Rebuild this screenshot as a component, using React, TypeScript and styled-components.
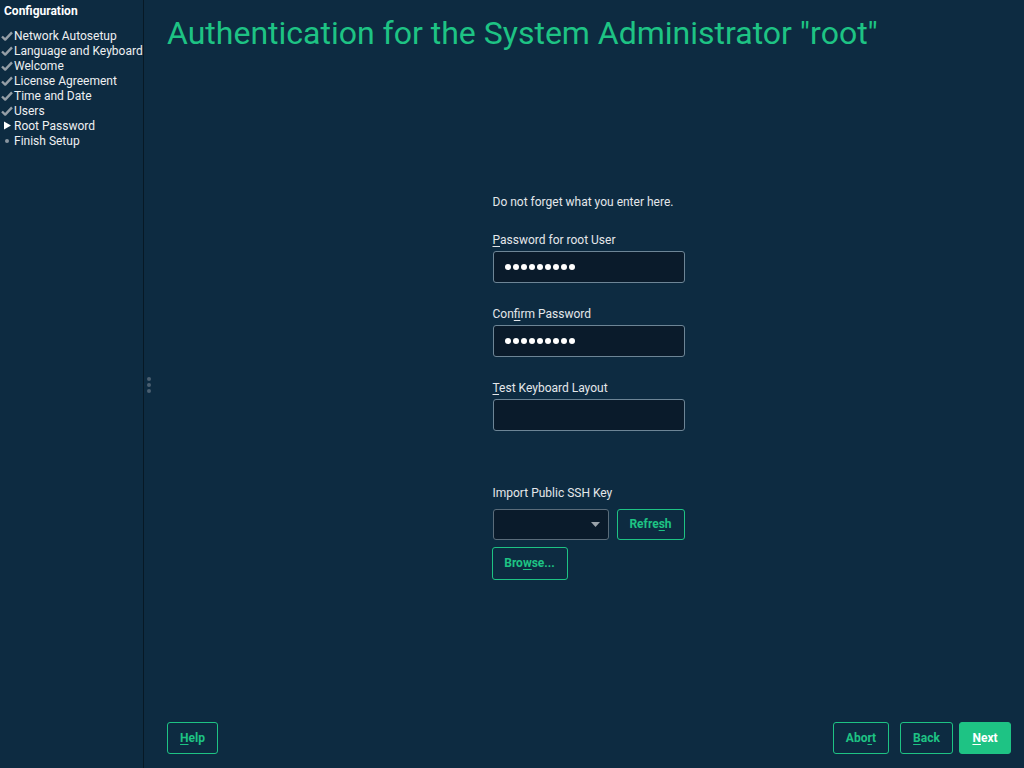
import styled, { createGlobalStyle } from "styled-components";

const GREEN = "#1ec384";
const BG = "#0d2b41";

const GlobalStyle = createGlobalStyle`
  html, body {
    margin: 0;
    padding: 0;
    background: ${BG};
    font-family: Roboto, "Liberation Sans", sans-serif;
  }
  #root {
    height: 768px;
  }
`;

const Screen = styled.div`
  display: flex;
  width: 1024px;
  height: 768px;
  background: ${BG};
  color: #e4e7ea;
  overflow: hidden;
`;

const Sidebar = styled.aside`
  width: 144px;
  flex-shrink: 0;
  border-right: 1px solid #071925;
  padding: 4px 0 0 0;
  box-sizing: border-box;
`;

const SideTitle = styled.h3`
  margin: 0 0 10px 4px;
  font-size: 12px;
  font-weight: 700;
  line-height: 14px;
  color: #ffffff;
`;

const StepList = styled.ul`
  list-style: none;
  margin: 0;
  padding: 0;
`;

const Step = styled.li`
  display: flex;
  align-items: center;
  height: 15px;
  font-size: 12px;
  color: #eef0f2;
  white-space: nowrap;
`;

const StepMark = styled.span`
  width: 14px;
  display: flex;
  justify-content: center;
  align-items: center;
  flex-shrink: 0;
`;

const Splitter = styled.div`
  width: 9px;
  flex-shrink: 0;
  display: flex;
  flex-direction: column;
  align-items: center;
  justify-content: center;
  gap: 2px;
  padding-top: 2px;
`;

const Dot = styled.span`
  width: 4px;
  height: 4px;
  border-radius: 50%;
  background: #4a5f70;
`;

const Main = styled.main`
  flex: 1;
  display: flex;
  flex-direction: column;
  padding: 0 13px 14px 14px;
  min-width: 0;
`;

const Title = styled.h1`
  margin: 14px 0 0 0;
  font-size: 32px;
  font-weight: 400;
  line-height: 38px;
  color: ${GREEN};
  white-space: nowrap;
`;

const Content = styled.section`
  flex: 1;
  display: flex;
  justify-content: center;
  align-items: center;
`;

const Form = styled.div`
  width: 192px;
  display: flex;
  flex-direction: column;
  margin-left: -1px;
`;

const Note = styled.p`
  margin: 0 0 24px 0;
  font-size: 12px;
  line-height: 14px;
`;

const Field = styled.div<{ $gap?: number }>`
  display: flex;
  flex-direction: column;
  margin-bottom: ${(p) => p.$gap ?? 24}px;
`;

const Label = styled.label`
  font-size: 12px;
  line-height: 14px;
  margin-bottom: 4px;
`;

const Mn = styled.u`
  text-decoration-thickness: 1px;
  text-underline-offset: 2px;
`;

const Input = styled.div`
  height: 32px;
  box-sizing: border-box;
  border: 1px solid #6d8596;
  border-radius: 3px;
  background: #0a1b2b;
  display: flex;
  align-items: center;
  padding-left: 11px;
  gap: 2px;
`;

const PwDot = styled.span`
  width: 6px;
  height: 6px;
  border-radius: 50%;
  background: #ffffff;
`;

const Row = styled.div`
  display: flex;
  gap: 8px;
  align-items: center;
  margin-top: 5px;
`;

const Combo = styled.div`
  width: 116px;
  height: 31px;
  box-sizing: border-box;
  border: 1px solid #5a6c7a;
  border-radius: 3px;
  background: #0a1b2b;
  display: flex;
  align-items: center;
  justify-content: flex-end;
  padding-right: 8px;
`;

const Button = styled.button<{ $primary?: boolean; $w: number; $h?: number }>`
  width: ${(p) => p.$w}px;
  height: ${(p) => p.$h ?? 32}px;
  box-sizing: border-box;
  border: 1px solid ${GREEN};
  border-radius: 3px;
  background: ${(p) => (p.$primary ? GREEN : "transparent")};
  color: ${(p) => (p.$primary ? "#ffffff" : GREEN)};
  font-family: Roboto, "Liberation Sans", sans-serif;
  font-size: 12px;
  font-weight: 700;
  padding: 0;
  cursor: pointer;
`;

const BrowseWrap = styled.div`
  margin-top: 7px;
  margin-left: -1px;
`;

const Footer = styled.footer`
  display: flex;
  align-items: center;
  gap: 11px;
`;

const Spacer = styled.div`
  flex: 1;
`;

const NextGap = styled.div`
  margin-left: -5px;
  display: flex;
`;

function Check() {
  return (
    <svg width="12" height="10" viewBox="0 0 12 10">
      <path d="M1 5.5 L4.2 8.6 L11 1.4" fill="none" stroke="#959ea6" strokeWidth="2.4" strokeLinejoin="round" />
    </svg>
  );
}

function Arrow() {
  return (
    <svg width="9" height="9" viewBox="0 0 9 9">
      <path d="M1 0.5 L8 4.5 L1 8.5 Z" fill="#ffffff" />
    </svg>
  );
}

function Bullet() {
  return (
    <svg width="6" height="6" viewBox="0 0 6 6">
      <circle cx="3" cy="3" r="2" fill="#8a96a0" />
    </svg>
  );
}

const steps: { name: string; state: "done" | "current" | "todo" }[] = [
  { name: "Network Autosetup", state: "done" },
  { name: "Language and Keyboard", state: "done" },
  { name: "Welcome", state: "done" },
  { name: "License Agreement", state: "done" },
  { name: "Time and Date", state: "done" },
  { name: "Users", state: "done" },
  { name: "Root Password", state: "current" },
  { name: "Finish Setup", state: "todo" },
];

function Dots() {
  return (
    <>
      {Array.from({ length: 9 }).map((_, i) => (
        <PwDot key={i} />
      ))}
    </>
  );
}

export default function App() {
  return (
    <>
      <GlobalStyle />
      <Screen>
        <Sidebar>
          <SideTitle>Configuration</SideTitle>
          <StepList>
            {steps.map((s) => (
              <Step key={s.name}>
                <StepMark>
                  {s.state === "done" ? <Check /> : s.state === "current" ? <Arrow /> : <Bullet />}
                </StepMark>
                {s.name}
              </Step>
            ))}
          </StepList>
        </Sidebar>
        <Splitter>
          <Dot />
          <Dot />
          <Dot />
        </Splitter>
        <Main>
          <Title>Authentication for the System Administrator "root"</Title>
          <Content>
            <Form>
              <Note>Do not forget what you enter here.</Note>
              <Field>
                <Label>
                  <Mn>P</Mn>assword for root User
                </Label>
                <Input>
                  <Dots />
                </Input>
              </Field>
              <Field>
                <Label>
                  Con<Mn>f</Mn>irm Password
                </Label>
                <Input>
                  <Dots />
                </Input>
              </Field>
              <Field $gap={55}>
                <Label>
                  <Mn>T</Mn>est Keyboard Layout
                </Label>
                <Input />
              </Field>
              <Label>Import Public SSH Key</Label>
              <Row>
                <Combo>
                  <svg width="9" height="5" viewBox="0 0 9 5">
                    <path d="M0 0 L9 0 L4.5 5 Z" fill="#9aa3ab" />
                  </svg>
                </Combo>
                <Button $w={68} $h={31}>
                  Refre<Mn>s</Mn>h
                </Button>
              </Row>
              <BrowseWrap>
                <Button $w={76} $h={33}>
                  Bro<Mn>w</Mn>se...
                </Button>
              </BrowseWrap>
            </Form>
          </Content>
          <Footer>
            <Button $w={51}>
              <Mn>H</Mn>elp
            </Button>
            <Spacer />
            <Button $w={56}>
              Abo<Mn>r</Mn>t
            </Button>
            <Button $w={53}>
              <Mn>B</Mn>ack
            </Button>
            <NextGap>
              <Button $primary $w={52}>
                <Mn>N</Mn>ext
              </Button>
            </NextGap>
          </Footer>
        </Main>
      </Screen>
    </>
  );
}
